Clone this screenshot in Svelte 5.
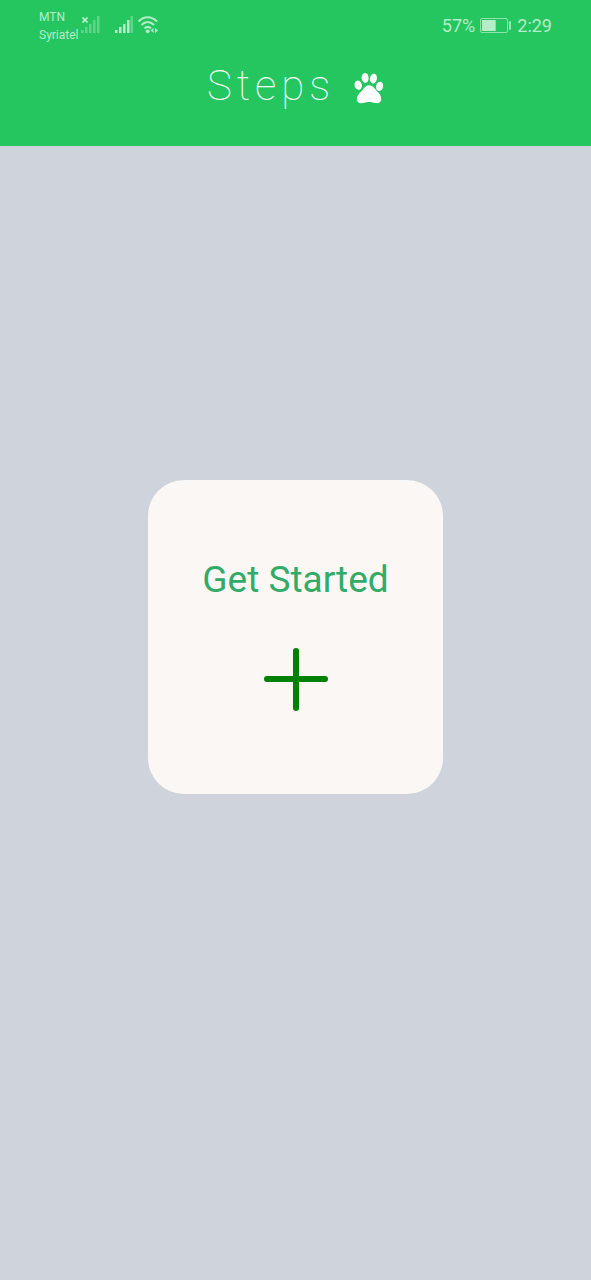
<script>
  const carriers = ['MTN', 'Syriatel'];
  const battery = 57;
  const time = '2:29';
</script>

<div class="screen">
  <header>
    <div class="status">
      <div class="network">
        <div class="carriers">
          {#each carriers as name}<span>{name}</span>{/each}
        </div>
        <svg class="no-signal" width="20" height="20" viewBox="0 0 20 20" aria-hidden="true">
          <path d="M1.500 1.500l5 5M6.500 1.500l-5 5" stroke="#c5f2d4" stroke-width="1.700" />
          <g fill="#5fd687">
            <rect x="0" y="14" width="2.500" height="3" />
            <rect x="4" y="11" width="2.500" height="6" />
            <rect x="8" y="8" width="2.500" height="9" />
            <rect x="12" y="4" width="2.500" height="13" />
            <rect x="16" y="0" width="2.500" height="17" />
          </g>
        </svg>
        <svg class="signal" width="18" height="20" viewBox="0 0 18 20" aria-hidden="true">
          <g fill="#b5edc8">
            <rect x="0" y="14" width="2.500" height="3" />
            <rect x="4" y="11" width="2.500" height="6" />
            <rect x="8" y="8" width="2.500" height="9" />
            <rect x="12" y="4" width="2.500" height="13" />
          </g>
          <rect x="15.500" y="0" width="2.500" height="17" fill="#5fd687" />
        </svg>
        <svg class="wifi" width="22" height="20" viewBox="0 0 22 20" aria-hidden="true">
          <g fill="none" stroke="#b5edc8" stroke-width="2">
            <path d="M.500 5.500C6 -.200 13.500 -.200 19 5.500" />
            <path d="M3.500 9C7.500 5 12 5 16 9" />
            <path d="M6.500 12.500C8.500 10.500 11 10.500 13 12.500" />
          </g>
          <circle cx="9.700" cy="15.300" r="1.900" fill="#b5edc8" />
          <path d="M12.500 14.500L15.500 12v5zM20 14.500L17 12v5z" fill="#b5edc8" />
        </svg>
      </div>
      <div class="power">
        <span>{battery}%</span>
        <svg width="32" height="18" viewBox="0 0 32 18" aria-hidden="true">
          <rect x=".5" y="1.500" width="27" height="14" rx="1.500" fill="none" stroke="#8ee3aa" />
          <rect x="2" y="3" width={battery * 0.24} height="11" fill="#b5edc8" />
          <rect x="29" y="4" width="2" height="9" rx="1" fill="#9de7b5" />
        </svg>
        <time>{time}</time>
      </div>
    </div>
    <div class="brand">
      <h1>Steps</h1>
      <svg width="30" height="32" viewBox="0 0 30 32" fill="#fff" aria-hidden="true">
        <ellipse cx="4.200" cy="13.200" rx="3.600" ry="4.700" transform="rotate(-16 4.200 13.200)" />
        <ellipse cx="11.100" cy="5.900" rx="3.500" ry="4.900" transform="rotate(-5 11.100 5.900)" />
        <ellipse cx="19.400" cy="6.600" rx="3.500" ry="4.900" transform="rotate(10 19.400 6.600)" />
        <ellipse cx="25.600" cy="14.400" rx="3.500" ry="4.700" transform="rotate(14 25.600 14.400)" />
        <path d="M14.800 13.200C19 13.200 21 17 23.500 19.700C26 22.200 27.500 24.500 27.200 27.500C26.800 30.500 24.500 31.600 21.800 31.100C19 30.600 17 29.800 14.800 30C12.600 29.800 10 31 7.500 31.200C4.500 31.500 2.800 29.700 2.800 27C2.900 23.700 5.200 21.700 7.200 19.600C9.700 16.800 11.500 13.200 14.800 13.200Z" />
      </svg>
    </div>
  </header>

  <main>
    <button type="button">
      <span>Get Started</span>
      <svg width="64" height="64" viewBox="0 0 64 64" aria-hidden="true">
        <path d="M32 3v57M3 31h58" stroke="#008000" stroke-width="6" stroke-linecap="round" />
      </svg>
    </button>
  </main>
</div>

<style>
  .screen {
    display: flex;
    flex-direction: column;
    min-height: 100vh;
    background: #cfd4dc;
    font-family: Roboto, sans-serif;
  }
  header {
    background: #25c660;
    padding-bottom: 30px;
  }
  .status {
    display: flex;
    justify-content: space-between;
    padding: 8px 39px 0;
    color: #b5edc8;
  }
  .network {
    display: flex;
    align-items: center;
  }
  .carriers {
    display: flex;
    flex-direction: column;
    font-size: 12px;
    line-height: 18px;
  }
  .no-signal {
    margin: 0 14px 0 2px;
  }
  .wifi {
    margin-left: 5px;
  }
  .power {
    display: flex;
    align-items: center;
    gap: 5px;
    font-size: 18px;
    line-height: 36px;
  }
  .brand {
    display: flex;
    justify-content: center;
    align-items: center;
    gap: 19px;
    padding-top: 16px;
  }
  h1 {
    margin: 0;
    padding-bottom: 4px;
    color: #fff;
    font-size: 42px;
    font-weight: 100;
    line-height: 52px;
    letter-spacing: 5px;
  }
  main {
    flex: 1;
    display: flex;
    justify-content: center;
    align-items: flex-start;
    padding: 334px 0 64px;
  }
  button {
    display: flex;
    flex-direction: column;
    align-items: center;
    gap: 44px;
    width: 50%;
    padding: 76px 16px 82px;
    border: 0;
    border-radius: 36px;
    background: #faf7f4;
    color: #32ab68;
    font-family: inherit;
    font-size: 37px;
    line-height: 48px;
    cursor: pointer;
  }
</style>
